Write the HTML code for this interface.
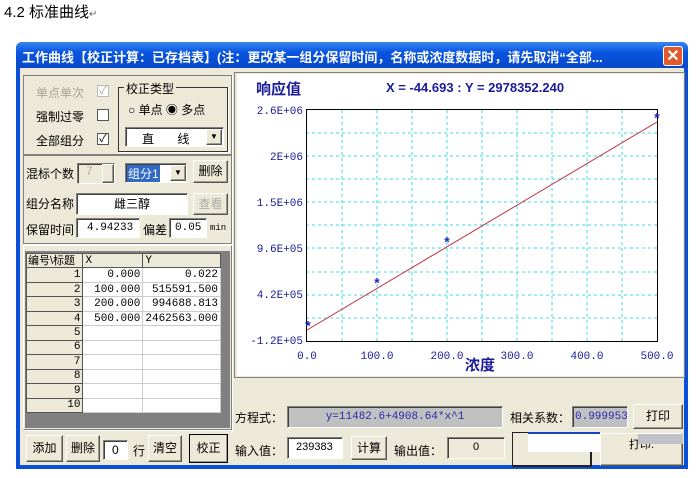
<!DOCTYPE html><html><head><meta charset="utf-8"><style>
body{margin:0;width:697px;height:478px;background:#fff;position:relative;overflow:hidden;font-family:"Liberation Sans","Noto Sans CJK SC",sans-serif;font-size:12px;color:#000}
.a{position:absolute}
.btn{position:absolute;background:#ece9d8;border:1px solid;border-color:#fff #555 #555 #fff;box-shadow:inset -1px -1px 0 #a09c8c;text-align:center;box-sizing:border-box}
.in{position:absolute;background:#fff;border:1px solid;border-color:#808080 #fff #fff #808080;box-shadow:inset 1px 1px 0 #404040;box-sizing:border-box}
.grp{position:absolute;border:1px solid #808080;box-shadow:1px 1px 0 #fff;box-sizing:border-box}
.cb{position:absolute;width:12px;height:12px;background:#fff;border:1px solid #555;box-sizing:border-box;font-size:11px;line-height:10px;text-align:center}
.mono{font-family:"Liberation Mono","Noto Sans CJK SC",monospace}
table{border-collapse:collapse}
td{padding:0 2px;font-size:11px;line-height:12px}
</style></head><body>
<div class="a" style="left:4px;top:1px;font-size:15px">4.2 标准曲线<span style="font-size:10px;color:#666">↵</span></div>
<div class="a" style="left:16px;top:42px;width:672px;height:427px;background:#0a4fd8;border-radius:6px 6px 0 0"></div>
<div class="a" style="left:16px;top:42px;width:672px;height:26px;background:linear-gradient(#3a86f0,#0a55e0 40%,#0848c8);border-radius:6px 6px 0 0"></div>
<div class="a" style="left:22px;top:47px;color:#fff;font-weight:bold;font-size:13px;white-space:nowrap">工作曲线【校正计算：已存档表】(注：更改某一组分保留时间，名称或浓度数据时，请先取消“全部...</div>
<div class="a" style="left:663px;top:46px;width:20px;height:20px;background:#e25a2c;border:1px solid #fff;border-radius:3px;color:#fff;font-size:16px;line-height:19px;text-align:center;font-weight:bold;box-sizing:border-box">✕</div>
<div class="a" style="left:20px;top:68px;width:664px;height:397px;background:#ece9d8"></div>
<div class="grp" style="left:23px;top:75px;width:209px;height:80px"></div>
<div class="a" style="left:36px;top:84px;color:#a8a698">单点单次</div>
<div class="cb" style="left:97px;top:85px;border-color:#bbb;color:#aaa">✓</div>
<div class="a" style="left:36px;top:108px">强制过零</div>
<div class="cb" style="left:97px;top:109px"></div>
<div class="a" style="left:36px;top:132px">全部组分</div>
<div class="cb" style="left:97px;top:133px">✓</div>
<div class="grp" style="left:118px;top:87px;width:110px;height:65px;border-color:#333"></div>
<div class="a" style="left:124px;top:80px;background:#ece9d8;padding:0 2px">校正类型</div>
<div class="a" style="left:128px;top:101px">○ 单点 ◉ 多点</div>
<div class="in" style="left:125px;top:127px;width:99px;height:20px;padding:2px 0 0 16px">直&nbsp;&nbsp;&nbsp;&nbsp;&nbsp;&nbsp;&nbsp;线</div>
<div class="btn" style="left:206px;top:129px;width:16px;height:16px;font-size:8px;line-height:14px">▼</div>
<div class="grp" style="left:23px;top:155px;width:209px;height:89px"></div>
<div class="a" style="left:26px;top:165px">混标个数</div>
<div class="in" style="left:77px;top:163px;width:38px;height:21px;background:#ece9d8;color:#aaa;padding-left:8px">7</div>
<div class="btn" style="left:102px;top:164px;width:12px;height:19px"></div>
<div class="in" style="left:125px;top:163px;width:62px;height:20px"></div>
<div class="a" style="left:127px;top:165px;background:#316ac5;color:#fff;padding:0 1px">组分1</div>
<div class="btn" style="left:170px;top:165px;width:16px;height:16px;font-size:8px;line-height:14px">▼</div>
<div class="btn" style="left:193px;top:160px;width:35px;height:23px;line-height:21px">删除</div>
<div class="a" style="left:26px;top:195px">组分名称</div>
<div class="in" style="left:76px;top:193px;width:112px;height:22px;text-align:center;padding-top:1px">雌三醇</div>
<div class="btn" style="left:193px;top:193px;width:35px;height:22px;line-height:20px;color:#aaa">查看</div>
<div class="a" style="left:26px;top:221px">保留时间</div>
<div class="in mono" style="left:76px;top:218px;width:64px;height:20px;padding:3px 0 0 10px;font-size:11px">4.94233</div>
<div class="a" style="left:143px;top:221px">偏差</div>
<div class="in mono" style="left:169px;top:218px;width:38px;height:20px;padding:3px 0 0 5px;font-size:11px">0.05</div>
<div class="a mono" style="left:210px;top:223px;font-size:9px">min</div>
<div class="grp" style="left:23px;top:245px;width:209px;height:185px;border-color:#fff #808080 #808080 #fff"></div>
<div class="a" style="left:25px;top:251px;width:205px;height:177px;background:#808080"></div>
<table class="a mono" style="left:26px;top:253px;background:#fff;width:195px;height:160px">
<tr style="background:#ece9d8"><td style="width:54px;border:1px solid #555;font-family:'Liberation Sans','Noto Sans CJK SC';font-size:11px;padding:0 1px">编号\标题</td><td style="width:55px;border:1px solid #555">X</td><td style="border:1px solid #555">Y</td></tr>
<tr><td style="background:#ece9d8;text-align:right;border:1px solid #555">1</td><td style="text-align:right;border:1px solid #ccc">0.000</td><td style="text-align:right;border:1px solid #ccc">0.022</td></tr>
<tr><td style="background:#ece9d8;text-align:right;border:1px solid #555">2</td><td style="text-align:right;border:1px solid #ccc">100.000</td><td style="text-align:right;border:1px solid #ccc">515591.500</td></tr>
<tr><td style="background:#ece9d8;text-align:right;border:1px solid #555">3</td><td style="text-align:right;border:1px solid #ccc">200.000</td><td style="text-align:right;border:1px solid #ccc">994688.813</td></tr>
<tr><td style="background:#ece9d8;text-align:right;border:1px solid #555">4</td><td style="text-align:right;border:1px solid #ccc">500.000</td><td style="text-align:right;border:1px solid #ccc">2462563.000</td></tr>
<tr><td style="background:#ece9d8;text-align:right;border:1px solid #555">5</td><td style="border:1px solid #ccc"></td><td style="border:1px solid #ccc"></td></tr>
<tr><td style="background:#ece9d8;text-align:right;border:1px solid #555">6</td><td style="border:1px solid #ccc"></td><td style="border:1px solid #ccc"></td></tr>
<tr><td style="background:#ece9d8;text-align:right;border:1px solid #555">7</td><td style="border:1px solid #ccc"></td><td style="border:1px solid #ccc"></td></tr>
<tr><td style="background:#ece9d8;text-align:right;border:1px solid #555">8</td><td style="border:1px solid #ccc"></td><td style="border:1px solid #ccc"></td></tr>
<tr><td style="background:#ece9d8;text-align:right;border:1px solid #555">9</td><td style="border:1px solid #ccc"></td><td style="border:1px solid #ccc"></td></tr>
<tr><td style="background:#ece9d8;text-align:right;border:1px solid #555">10</td><td style="border:1px solid #ccc"></td><td style="border:1px solid #ccc"></td></tr>
</table>
<div class="btn" style="left:26px;top:435px;width:37px;height:27px;line-height:25px">添加</div>
<div class="btn" style="left:66px;top:435px;width:34px;height:27px;line-height:25px">删除</div>
<div class="in" style="left:103px;top:440px;width:25px;height:20px;padding:2px 0 0 8px">0</div>
<div class="a" style="left:133px;top:442px">行</div>
<div class="btn" style="left:148px;top:435px;width:34px;height:27px;line-height:25px">清空</div>
<div class="btn" style="left:189px;top:434px;width:39px;height:29px;line-height:27px;border-color:#000">校正</div>
<div class="a" style="left:234px;top:72px;width:451px;height:306px;border:1px solid #808080;box-sizing:border-box"></div>
<div class="a" style="left:237px;top:74px;width:446px;height:302px;background:#fff"></div>
<svg class="a" style="left:0;top:0" width="697" height="478">
<g stroke="#3cdcdc" stroke-dasharray="3,3" stroke-width="1">
<line x1="342" y1="110" x2="342" y2="342"/><line x1="377" y1="110" x2="377" y2="342"/><line x1="412" y1="110" x2="412" y2="342"/><line x1="447" y1="110" x2="447" y2="342"/><line x1="482" y1="110" x2="482" y2="342"/><line x1="517" y1="110" x2="517" y2="342"/><line x1="552" y1="110" x2="552" y2="342"/><line x1="587" y1="110" x2="587" y2="342"/><line x1="622" y1="110" x2="622" y2="342"/>
<line x1="306" y1="133" x2="657" y2="133"/><line x1="306" y1="156" x2="657" y2="156"/><line x1="306" y1="179" x2="657" y2="179"/><line x1="306" y1="202" x2="657" y2="202"/><line x1="306" y1="225" x2="657" y2="225"/><line x1="306" y1="248" x2="657" y2="248"/><line x1="306" y1="272" x2="657" y2="272"/><line x1="306" y1="295" x2="657" y2="295"/><line x1="306" y1="318" x2="657" y2="318"/>
</g>
<rect x="306.5" y="109.5" width="351" height="232" fill="none" stroke="#000"/>
<line x1="307" y1="330" x2="657" y2="122" stroke="#c03040" stroke-width="1"/>
<g fill="#2020c0" font-size="14" font-weight="bold" font-family="Liberation Mono" text-anchor="middle"><text x="308" y="331">*</text><text x="377" y="288">*</text><text x="447" y="247">*</text><text x="657" y="123">*</text></g>
<g fill="#1a1a9a" font-size="11" font-family="Liberation Mono" text-anchor="end">
<text x="303" y="114">2.6E+06</text><text x="303" y="160">2E+06</text><text x="303" y="206">1.5E+06</text><text x="303" y="252">9.6E+05</text><text x="303" y="298">4.2E+05</text><text x="303" y="344">-1.2E+05</text></g>
<g fill="#1a1a9a" font-size="11" font-family="Liberation Mono" text-anchor="middle">
<text x="307" y="359">0.0</text><text x="377" y="359">100.0</text><text x="447" y="359">200.0</text><text x="517" y="359">300.0</text><text x="587" y="359">400.0</text><text x="657" y="359">500.0</text></g>
</svg>
<div class="a" style="left:256px;top:78px;color:#1a1a9a;font-weight:bold;font-size:15px">响应值</div>
<div class="a" style="left:386px;top:80px;color:#1a1a9a;font-weight:bold;font-size:13px">X = -44.693 : Y = 2978352.240</div>
<div class="a" style="left:465px;top:354px;color:#1a1a9a;font-weight:bold;font-size:15px">浓度</div>
<div class="a" style="left:235px;top:409px">方程式：</div>
<div class="in mono" style="left:287px;top:406px;width:216px;height:22px;background:#c0c0c0;color:#2a2ab0;text-align:center;padding-top:4px;font-size:11px">y=11482.6+4908.64*x^1</div>
<div class="a" style="left:510px;top:409px">相关系数：</div>
<div class="in mono" style="left:572px;top:406px;width:56px;height:22px;background:#c0c0c0;color:#2a2ab0;padding:4px 0 0 2px;font-size:11px">0.999953</div>
<div class="btn" style="left:633px;top:404px;width:50px;height:25px;line-height:23px">打印</div>
<div class="a" style="left:235px;top:442px">输入值：</div>
<div class="in" style="left:287px;top:437px;width:56px;height:22px;padding:3px 0 0 8px;font-size:11px">239383</div>
<div class="btn" style="left:351px;top:436px;width:36px;height:24px;line-height:22px">计算</div>
<div class="a" style="left:394px;top:442px">输出值：</div>
<div class="in" style="left:447px;top:437px;width:58px;height:22px;background:#ece9d8;text-align:center;padding-top:3px;font-size:11px">0</div>
<div class="a" style="left:512px;top:432px;width:80px;height:35px;border:1px solid #222;border-width:1px 2px 2px 1px;box-sizing:border-box"></div>
<div class="a" style="left:528px;top:432px;width:72px;height:18px;background:#fff;border-top:2px solid #1840c0"></div>
<div class="btn" style="left:600px;top:433px;width:83px;height:33px;padding-top:2px;font-size:11px">打印.</div>
<div class="a" style="left:638px;top:434px;width:45px;height:10px;background:#c0c0c8"></div>
</body></html>
